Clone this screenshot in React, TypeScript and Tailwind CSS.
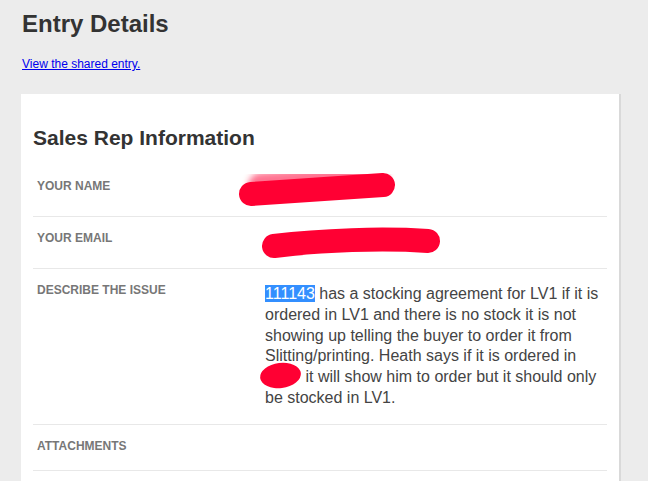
import React from "react";

const RED = "#ff0033";

function Row({
  label,
  children,
  h,
}: {
  label: string;
  children?: React.ReactNode;
  h?: string;
}) {
  return (
    <div className={`flex border-b border-[#e8e8e8] ${h ?? ""}`}>
      <div className="w-[232px] shrink-0 pl-[4px] pt-[15px] text-[12px] leading-[12px] font-bold uppercase text-[#777777]">
        {label}
      </div>
      <div className="flex-1 pr-[4px] py-[15px] text-[16px] leading-[20.8px] text-[#444444]">
        {children}
      </div>
    </div>
  );
}

export default function App() {
  return (
    <div
      className="min-h-[481px] bg-[#ececec] pl-[21px] pt-[10px] pb-[40px]"
      style={{ fontFamily: '"Liberation Sans", Arial, sans-serif' }}
    >
      <h1 className="pl-[1px] text-[24px] leading-[28px] font-bold text-[#333333]">
        Entry Details
      </h1>
      <a
        href="#"
        className="mt-[19px] block w-fit pl-[1px] text-[12px] leading-[14px] text-[#0000ee] underline"
      >
        View the shared entry.
      </a>
      <div className="mt-[23px] w-[598px] bg-white px-[12px] pt-[32px] pb-[20px] shadow-[2px_0_0_#d9d9d9]">
        <h2 className="mb-[15px] text-[21px] leading-[24px] font-bold text-[#333333]">
          Sales Rep Information
        </h2>
        <Row label="Your Name">
          <div className="relative h-[21px]">
            <svg
              className="absolute left-[-26px] top-[-16px] overflow-visible"
              width="170"
              height="50"
            >
              <defs>
                <filter id="blur1" x="-20%" y="-50%" width="140%" height="200%">
                  <feGaussianBlur stdDeviation="3" />
                </filter>
              </defs>
              <line
                x1="22"
                y1="22"
                x2="136"
                y2="14"
                stroke={RED}
                strokeOpacity="0.55"
                strokeWidth="26"
                strokeLinecap="round"
                filter="url(#blur1)"
              />
              <line
                x1="12"
                y1="30"
                x2="144"
                y2="21"
                stroke={RED}
                strokeWidth="24"
                strokeLinecap="round"
              />
            </svg>
          </div>
        </Row>
        <Row label="Your Email">
          <div className="relative h-[21px]">
            <svg
              className="absolute left-[-3px] top-[-2px] overflow-visible"
              width="180"
              height="32"
            >
              <path
                d="M12 16 C 60 10, 120 8, 166 11"
                stroke={RED}
                strokeWidth="24"
                strokeLinecap="round"
                fill="none"
              />
            </svg>
          </div>
        </Row>
        <Row label="Describe the issue">
          <span className="bg-[#338fff] text-white">111143</span> has a
          stocking agreement for LV1 if it is ordered in LV1 and there is no
          stock it is not showing up telling the buyer to order it from
          Slitting/printing. Heath says if it is ordered in{" "}
          <span className="relative inline-block h-[10px] w-[36px] align-baseline">
            <svg
              className="absolute left-[-5px] top-[-10px] overflow-visible"
              width="42"
              height="27"
            >
              <ellipse
                cx="20.5"
                cy="13.5"
                rx="20.5"
                ry="12.5"
                fill={RED}
                transform="rotate(-7 20.5 13.5)"
              />
            </svg>
          </span>{" "}
          it will show him to order but it should only be stocked in LV1.
        </Row>
        <Row label="Attachments" h="h-[46px]" />
      </div>
    </div>
  );
}
